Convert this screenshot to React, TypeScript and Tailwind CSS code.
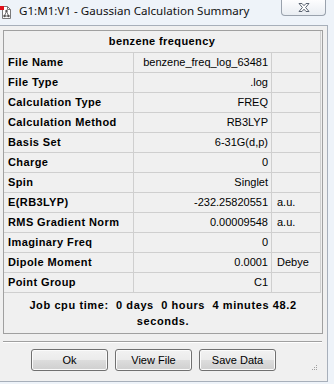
import React from "react";

const rows: [string, string, string][] = [
  ["File Name", "benzene_freq_log_63481", ""],
  ["File Type", ".log", ""],
  ["Calculation Type", "FREQ", ""],
  ["Calculation Method", "RB3LYP", ""],
  ["Basis Set", "6-31G(d,p)", ""],
  ["Charge", "0", ""],
  ["Spin", "Singlet", ""],
  ["E(RB3LYP)", "-232.25820551", "a.u."],
  ["RMS Gradient Norm", "0.00009548", "a.u."],
  ["Imaginary Freq", "0", ""],
  ["Dipole Moment", "0.0001", "Debye"],
  ["Point Group", "C1", ""],
];

const WindowIcon = () => (
  <svg width="12" height="16" viewBox="0 0 12 16" className="shrink-0">
    <path d="M2.5 3.5h5l3 3v9h-8z" fill="#fff" stroke="#7a7a7a" />
    <path d="M7.5 3.5v3h3" fill="none" stroke="#7a7a7a" />
    <rect x="0" y="3" width="4" height="4" fill="#e0101a" />
    <circle cx="6.5" cy="8" r="1.2" fill="#555" />
    <circle cx="4.5" cy="13" r="1.2" fill="#555" />
    <circle cx="8.5" cy="13" r="1.2" fill="#555" />
    <path d="M6.5 8L4.5 13M6.5 8l2 5M4.5 13h4" stroke="#555" strokeWidth="0.8" />
  </svg>
);

const CloseGlyph = () => (
  <svg width="14" height="11" viewBox="0 0 14 11">
    <path d="M2 1.5h3l2 2.2 2-2.2h3l-3.4 4 3.4 4h-3l-2-2.3-2 2.3h-3l3.4-4z" fill="#fff" stroke="#5b6472" strokeWidth="1" strokeLinejoin="round" />
  </svg>
);

const Btn = ({ label }: { label: string }) => (
  <button className="w-[77px] h-[22px] rounded-[3px] border border-[#707070] bg-[linear-gradient(#f2f2f2,#ebebeb_50%,#dddddd_50%,#cfcfcf)] shadow-[inset_0_0_0_1px_#fbfbfb] text-[11px] text-black">
    {label}
  </button>
);

const App = () => {
  return (
    <div className="w-[334px] h-[384px] overflow-hidden bg-[#eef3f9] font-['Liberation_Sans',Arial,sans-serif] text-black">
      <div className="h-[25px] flex items-start relative">
        <div className="pt-[3px]">
          <WindowIcon />
        </div>
        <span className="ml-[7px] mt-[3px] text-[11.6px] leading-[16px] font-['Noto_Sans','Liberation_Sans',sans-serif] text-[#111]">
          G1:M1:V1 - Gaussian Calculation Summary
        </span>
        <div className="ml-auto mr-[8px] w-[45px] h-[16px] rounded-b-[4px] border border-t-0 border-[#9aa2ad] bg-[linear-gradient(#fdfdfe,#e9edf2)] flex items-center justify-center">
          <CloseGlyph />
        </div>
      </div>

      <div className="relative w-[328px] h-[357px] bg-[#f0f0f0] border-t border-r border-b border-[#a7afba] pl-[3px] pt-[4px]">
        <div className="w-[320px] border border-[#a0a0a0]">
          <div className="w-[317px] h-[22px] border-r border-b border-[#cfcfcf] flex items-center justify-center font-bold text-[11px] tracking-[0.4px]">
            benzene frequency
          </div>
          {rows.map(([label, value, unit]) => (
            <div key={label} className="flex h-[20px] text-[11px]">
              <div className="w-[130px] border-r border-b border-[#cfcfcf] pl-[4px] flex items-center font-bold tracking-[0.4px]">
                {label}
              </div>
              <div className="w-[138px] border-r border-b border-[#cfcfcf] pr-[3px] flex items-center justify-end">
                {value}
              </div>
              <div className="w-[49px] border-r border-b border-[#cfcfcf] pl-[5px] flex items-center">
                {unit}
              </div>
            </div>
          ))}
          <div className="h-[40px] pt-[4px] text-center font-bold text-[11px] leading-[16px] tracking-[0.6px] whitespace-pre">
            <div>{"Job cpu time:  0 days  0 hours  4 minutes 48.2"}</div>
            <div>seconds.</div>
          </div>
        </div>

        <div className="mt-[7px] w-[319px] h-[2px] border-t border-[#a0a0a0] border-b border-b-white" />

        <div className="mt-[6px] pl-[28px] flex gap-[7px]">
          <Btn label="Ok" />
          <Btn label="View File" />
          <Btn label="Save Data" />
        </div>

        <div className="absolute right-[10px] bottom-[11px] grid grid-cols-3 gap-[1px]">
          <span className="w-[1px] h-[1px]" />
          <span className="w-[1px] h-[1px]" />
          <span className="w-[1px] h-[1px] bg-[#a0a0a0]" />
          <span className="w-[1px] h-[1px]" />
          <span className="w-[1px] h-[1px] bg-[#a0a0a0]" />
          <span className="w-[1px] h-[1px] bg-[#a0a0a0]" />
          <span className="w-[1px] h-[1px] bg-[#a0a0a0]" />
          <span className="w-[1px] h-[1px] bg-[#a0a0a0]" />
          <span className="w-[1px] h-[1px] bg-[#a0a0a0]" />
        </div>
      </div>
    </div>
  );
};

export default App;
